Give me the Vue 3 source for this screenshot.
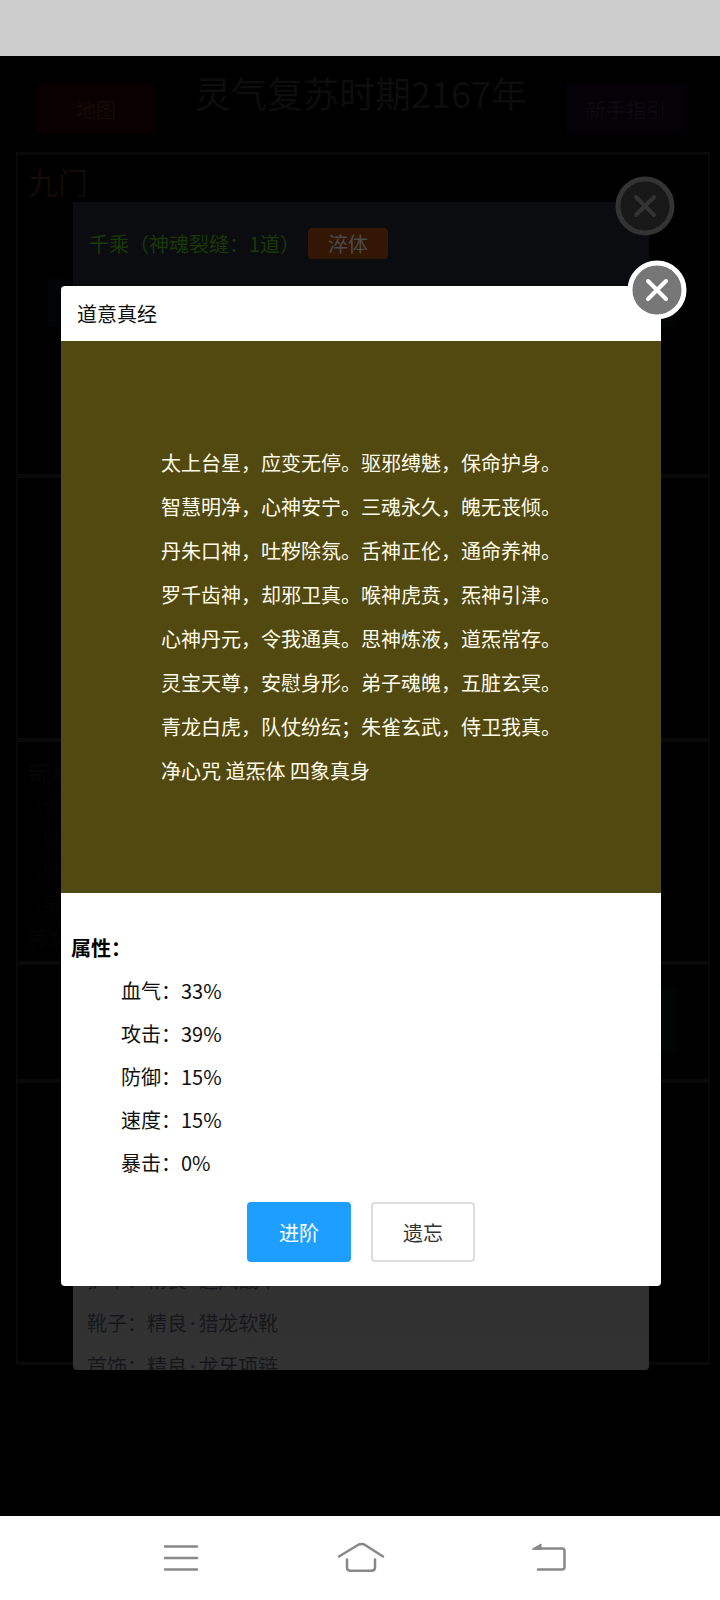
<script setup>
import { ref } from 'vue'

const verses = [
  '太上台星，应变无停。驱邪缚魅，保命护身。',
  '智慧明净，心神安宁。三魂永久，魄无丧倾。',
  '丹朱口神，吐秽除氛。舌神正伦，通命养神。',
  '罗千齿神，却邪卫真。喉神虎贲，炁神引津。',
  '心神丹元，令我通真。思神炼液，道炁常存。',
  '灵宝天尊，安慰身形。弟子魂魄，五脏玄冥。',
  '青龙白虎，队仗纷纭；朱雀玄武，侍卫我真。',
  '净心咒 道炁体 四象真身'
]

const attrs = [
  { name: '血气', value: 33 },
  { name: '攻击', value: 39 },
  { name: '防御', value: 15 },
  { name: '速度', value: 15 },
  { name: '暴击', value: 0 }
]

const equips = [
  { slot: '护甲', grade: '精良', name: '追风战甲' },
  { slot: '靴子', grade: '精良', name: '猎龙软靴' },
  { slot: '首饰', grade: '精良', name: '龙牙项链' }
]

const news = ['沂', '叶', '叶', '寻']

const showRole = ref(true)
const showBook = ref(true)
</script>

<template>
  <div class="phone">
    <div class="status-bar"></div>

    <main class="stage">
      <header class="top">
        <button class="top-btn map">地图</button>
        <h1 class="era">灵气复苏时期2167年</h1>
        <button class="top-btn guide">新手指引</button>
      </header>

      <div class="board">
        <section class="cell cell-sect">
          <h2 class="sect-name">九门</h2>
          <div class="strip"></div>
        </section>
        <section class="cell cell-scene"></section>
        <section class="cell cell-news">
          <div class="news-title">新人</div>
          <ul class="news-list">
            <li v-for="(n, i) in news" :key="i"><span class="dot">·</span>{{ n }}</li>
          </ul>
          <div>美女</div>
        </section>
        <section class="cell cell-action">
          <div class="strip tall"></div>
        </section>
        <section class="cell cell-log"></section>
      </div>

      <div v-if="showRole" class="overlay">
        <div class="role">
          <button class="close dim" aria-label="关闭" @click="showRole = false">
            <svg viewBox="0 0 60 60" width="60" height="60">
              <circle class="ring" cx="30" cy="30" r="27" />
              <path class="cross" d="M21 21L39 39M39 21L21 39" />
            </svg>
          </button>
          <div class="role-inner">
            <div class="role-head">
              <span class="role-name">千乘（神魂裂缝：1道）</span>
              <span class="badge">淬体</span>
            </div>
            <div class="role-body">
              <ul class="equips">
                <li v-for="e in equips" :key="e.slot">
                  {{ e.slot }}：{{ e.grade }}<span class="dot">·</span>{{ e.name }}
                </li>
              </ul>
            </div>
          </div>
        </div>
      </div>

      <div v-if="showBook" class="overlay">
        <div class="book" role="dialog" aria-labelledby="book-title">
          <button class="close" aria-label="关闭" @click="showBook = false">
            <svg viewBox="0 0 60 60" width="60" height="60">
              <circle class="ring" cx="30" cy="30" r="27" />
              <path class="cross" d="M21 21L39 39M39 21L21 39" />
            </svg>
          </button>
          <h2 id="book-title" class="book-title">道意真经</h2>
          <div class="verses">
            <p v-for="v in verses" :key="v">{{ v }}</p>
          </div>
          <div class="book-body">
            <h3 class="attr-title">属性：</h3>
            <ul class="attrs">
              <li v-for="a in attrs" :key="a.name">{{ a.name }}：{{ a.value }}%</li>
            </ul>
            <div class="actions">
              <button class="btn primary">进阶</button>
              <button class="btn">遗忘</button>
            </div>
          </div>
        </div>
      </div>
    </main>

    <nav class="nav-bar">
      <button class="nav-btn" aria-label="菜单">
        <svg viewBox="0 0 56 36" width="56" height="36">
          <path d="M12 6.5H44M12 18H44M12 29.5H44" />
        </svg>
      </button>
      <button class="nav-btn" aria-label="主页">
        <svg viewBox="0 0 56 36" width="56" height="36">
          <path d="M2 16.5L20.5 5.2Q24.5 3 28.5 5.2L46 16.5" />
          <path d="M10 19.5V27.5Q10 30.7 13.5 30.7H34.5Q38 30.7 38 27.5V19.5" />
        </svg>
      </button>
      <button class="nav-btn" aria-label="返回">
        <svg viewBox="0 0 56 36" width="56" height="36">
          <path d="M15 8.5H42Q44.5 8.5 44.5 11V27Q44.5 29.5 42 29.5H18" />
          <path class="tip" d="M12.5 9L21 4V9Z" />
        </svg>
      </button>
    </nav>
  </div>
</template>

<style>
body {
  background: #000;
}
</style>

<style scoped>
.phone {
  display: flex;
  flex-direction: column;
  min-height: 100vh;
  background: #000;
  font-family: "Noto Sans CJK SC", "Noto Sans", sans-serif;
  font-size: 20px;
}

h1,
h2,
h3,
p,
ul {
  margin: 0;
  padding: 0;
  font-weight: 400;
}

ul {
  list-style: none;
}

button {
  padding: 0;
  border: 0;
  background: none;
  font: inherit;
  cursor: pointer;
}

svg {
  display: block;
}

.dot {
  padding: 0 3px;
  font-family: "Noto Sans", sans-serif;
  line-height: 1;
}

.status-bar {
  height: 56px;
  background: #ccc;
}

.stage {
  position: relative;
  flex: 1;
}

/* game screen below the dialogs */
.top {
  display: flex;
  justify-content: space-between;
  align-items: flex-start;
  padding: 18px 34px 18px 36px;
}

.top-btn {
  width: 120px;
  height: 50px;
  margin-top: 10px;
  border-radius: 2px;
}

.map {
  background: #0b0000;
  color: #150a08;
}

.guide {
  background: #040107;
  color: #0c0a10;
}

.era {
  font-size: 36px;
  line-height: 36px;
  color: #0d0d0d;
}

.board {
  margin: 0 10px 0 16px;
  border: 1px solid #090909;
}

.cell {
  box-sizing: border-box;
  border: 1px solid #090909;
  border-width: 2px 1px;
  color: #050505;
}

.cell-sect {
  height: 323px;
  padding: 8px 10px;
}

.sect-name {
  font-size: 30px;
  line-height: 36px;
  color: #140a07;
}

.strip {
  height: 48px;
  margin: 80px 20px 0;
  background: #000405;
}

.cell-scene {
  height: 264px;
}

.cell-news {
  height: 223px;
  padding: 14px 10px;
  line-height: 33px;
}

.news-title {
  font-weight: 700;
}

.news-list {
  padding-left: 4px;
}

.cell-action {
  height: 118px;
  padding: 22px 10px;
}

.strip.tall {
  width: 50%;
  height: 66px;
  margin: 0 20px 0 auto;
}

.cell-log {
  height: 283px;
}

.overlay {
  position: absolute;
  inset: 0;
  display: flex;
  align-items: center;
  justify-content: center;
  padding-left: 2px;
}

.close {
  position: absolute;
  top: -26px;
  right: -26px;
}

.ring {
  fill: #777;
  stroke: #fff;
  stroke-width: 5;
}

.cross {
  fill: none;
  stroke: #fff;
  stroke-width: 4;
  stroke-linecap: round;
}

.dim .ring {
  fill: #181818;
  stroke: #333;
}

.dim .cross {
  stroke: #333;
}

.role {
  position: relative;
  width: 576px;
  max-width: 88%;
  height: 80%;
}

.role-inner {
  display: flex;
  flex-direction: column;
  height: 100%;
  overflow: hidden;
  border-radius: 0 0 4px 4px;
  background: linear-gradient(#262626, #323232);
}

.role-head {
  display: flex;
  align-items: center;
  gap: 8px;
  height: 82px;
  padding: 0 16px 2px;
  background: #0b0c10;
}

.role-name {
  color: #193806;
}

.badge {
  width: 80px;
  line-height: 31px;
  border-radius: 4px;
  background: #331704;
  color: #4a4a4a;
  text-align: center;
}

.role-body {
  display: flex;
  flex: 1;
  flex-direction: column;
  justify-content: flex-end;
  padding: 0 14px;
}

.equips {
  margin-bottom: -17px;
  line-height: 43px;
  color: #17171b;
}

.book {
  position: relative;
  width: 600px;
  max-width: 90%;
  border-radius: 4px;
  background: #fff;
  color: #111;
}

.book-title {
  padding: 0 16px;
  font-size: 20px;
  line-height: 55px;
}

.verses {
  padding: 100px;
  background: #524910;
  color: #fffbe8;
  line-height: 44px;
}

.verses p {
  white-space: nowrap;
}

.book-body {
  padding: 33px 10px 24px;
}

.attr-title {
  font-size: 20px;
  font-weight: 700;
  line-height: 43px;
  color: #000;
}

.attrs {
  padding-left: 50px;
  line-height: 43px;
}

.actions {
  display: flex;
  justify-content: center;
  gap: 20px;
  margin-top: 18px;
}

.btn {
  width: 104px;
  height: 60px;
  border: 2px solid #dedede;
  border-radius: 4px;
  background: #fff;
  color: #333;
}

.btn.primary {
  border-color: #1e9fff;
  background: #1e9fff;
  color: #fff;
}

.nav-bar {
  display: flex;
  justify-content: space-between;
  align-items: center;
  height: 84px;
  padding: 0 144px 0 153px;
  box-sizing: border-box;
  background: #fff;
}

.nav-btn path {
  fill: none;
  stroke: #888;
  stroke-width: 2.5;
  stroke-linecap: round;
  stroke-linejoin: round;
}

.nav-btn .tip {
  fill: #888;
  stroke-width: 1;
}
</style>
